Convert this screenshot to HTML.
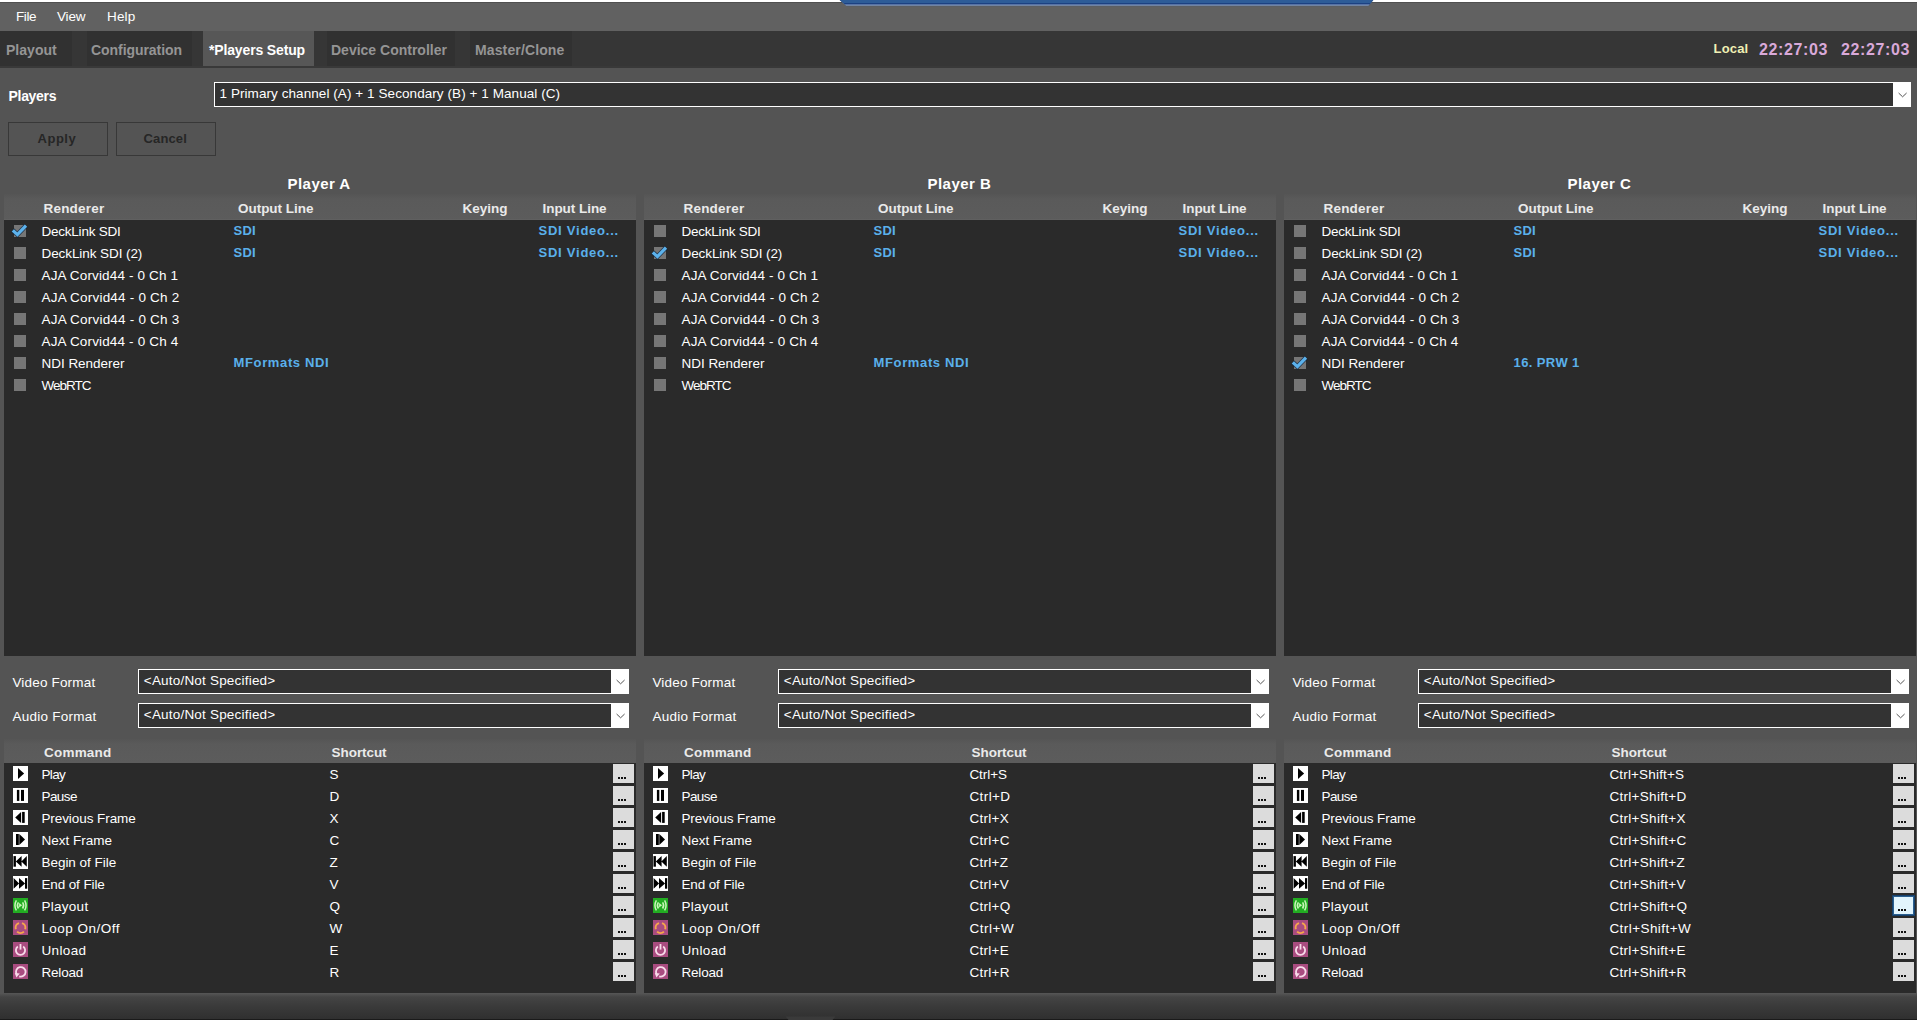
<!DOCTYPE html>
<html><head><meta charset="utf-8"><title>Players Setup</title>
<style>
*{margin:0;padding:0;box-sizing:border-box}
html,body{width:1917px;height:1020px;overflow:hidden;background:#545454;font-family:"Liberation Sans", sans-serif;color:#fff}
.a{position:absolute}
.t{position:absolute;white-space:nowrap;line-height:20px;height:20px}
.ic{position:absolute;width:15px;height:15px}
.ic.wh{background:#fff}
.ic svg{position:absolute;left:0;top:0}
.hdr{background:linear-gradient(#555 0px,#5a5a5a 5px,#5c5c5c 100%)}
.body{background:#2a2a2a}
.cb{position:absolute;width:12px;height:12px;background:#767676}
.combo{position:absolute;border:1px solid #fff;background:#333}
.combo .arr{position:absolute;right:0;top:0;width:17px;bottom:0;background:#fff}
.dots{position:absolute;width:21px;height:19px;background:#dcdcdc}
.dots i{position:absolute;top:13px;width:2px;height:2px;background:#111}
.dots.focus{background:#e2f5fd;box-shadow:0 0 0 1px #17406a;border:1px solid #2a5f90}
.dots.focus i{top:12px;margin-left:-1px}
</style></head><body>
<div class="a" style="left:0;top:0;width:1917px;height:2px;background:#fff"></div>
<div class="a" style="left:0;top:2px;width:1917px;height:29px;background:#616161"></div>
<div class="a" style="left:0;top:2px;width:1917px;height:1px;background:#505050"></div>
<svg class="a" style="left:838px;top:0" width="540" height="8"><path d="M1.5 0 L535.5 0 L530.5 6.2 L8.5 6.2 Z" fill="#4a5a70"/><path d="M2 0 L535 0 L530.5 5.5 L8 5.5 Z" fill="#98aed4"/><path d="M2 0 L535 0 L531.5 4.5 L7 4.5 Z" fill="#17397a"/><path d="M2 0 L535 0 L532.5 3.3 L5.5 3.3 Z" fill="#2d5c98"/></svg>

<div class="t" style="left:16px;top:7.32px;font-size:13.5px;color:#fff;letter-spacing:-0.41px;">File</div>
<div class="t" style="left:57px;top:7.32px;font-size:13.5px;color:#fff;letter-spacing:-0.16px;">View</div>
<div class="t" style="left:107px;top:7.32px;font-size:13.5px;color:#fff;letter-spacing:0.18px;">Help</div>
<div class="a" style="left:0;top:31px;width:1917px;height:37px;background:#363636"></div>
<div class="a" style="left:0;top:66px;width:1917px;height:2px;background:#393939"></div>
<div class="a" style="left:0px;top:31px;width:72px;height:35px;background:#313131"></div>
<div class="t" style="left:6px;top:40.15px;font-size:14px;font-weight:bold;color:#959595;letter-spacing:0.02px;">Playout</div>
<div class="a" style="left:87px;top:31px;width:105px;height:35px;background:#313131"></div>
<div class="t" style="left:91px;top:40.15px;font-size:14px;font-weight:bold;color:#959595;letter-spacing:-0.06px;">Configuration</div>
<div class="a" style="left:203px;top:31px;width:111px;height:35px;background:#575757"></div>
<div class="t" style="left:209px;top:40.15px;font-size:14px;font-weight:bold;color:#fff;letter-spacing:-0.15px;">*Players Setup</div>
<div class="a" style="left:327px;top:31px;width:128px;height:35px;background:#313131"></div>
<div class="t" style="left:331px;top:40.15px;font-size:14px;font-weight:bold;color:#959595;letter-spacing:-0.0px;">Device Controller</div>
<div class="a" style="left:470px;top:31px;width:102px;height:35px;background:#313131"></div>
<div class="t" style="left:475px;top:40.15px;font-size:14px;font-weight:bold;color:#959595;letter-spacing:0.13px;">Master/Clone</div>
<div class="t" style="left:1713.6px;top:39.00px;font-size:13px;font-weight:bold;color:#f0f0b4;letter-spacing:0.16px;">Local</div>
<div class="t" style="left:1759px;top:40.16px;font-size:16px;font-weight:bold;color:#d9a9d9;letter-spacing:0.61px;">22:27:03</div>
<div class="t" style="left:1841px;top:40.16px;font-size:16px;font-weight:bold;color:#d9a9d9;letter-spacing:0.61px;">22:27:03</div>
<div class="t" style="left:8.5px;top:86.05px;font-size:14px;font-weight:bold;color:#fff;letter-spacing:-0.3px;">Players</div>
<div class="combo" style="left:214px;top:82px;width:1697px;height:25px"><div class="arr"><svg width="18" height="23" style="position:absolute;left:0;top:0"><path d="M5.6 10 L9.6 13.8 L13.6 10" fill="none" stroke="#555" stroke-width="1"/></svg></div></div>
<div class="t" style="left:219.5px;top:84.32px;font-size:13.5px;color:#fff;letter-spacing:0.07px;">1 Primary channel (A) + 1 Secondary (B) + 1 Manual (C)</div>
<div class="a" style="left:8px;top:122px;width:100px;height:34px;border:1px solid #383838"></div>
<div class="a" style="left:116px;top:122px;width:100px;height:34px;border:1px solid #383838"></div>
<div class="t" style="left:37.5px;top:129.10px;font-size:13px;font-weight:bold;color:#262626;letter-spacing:0.53px;">Apply</div>
<div class="t" style="left:143.5px;top:129.10px;font-size:13px;font-weight:bold;color:#262626;letter-spacing:0.14px;">Cancel</div>
<div class="t" style="left:287.5px;top:173.80px;font-size:15px;font-weight:bold;color:#fff;letter-spacing:0.46px;">Player A</div>
<div class="a hdr" style="left:4px;top:194px;width:632px;height:26px"></div>
<div class="a" style="left:4px;top:219px;width:632px;height:1px;background:#606060"></div>
<div class="t" style="left:43.5px;top:199.32px;font-size:13.5px;font-weight:bold;color:#eaeaea;letter-spacing:0.2px;">Renderer</div>
<div class="t" style="left:238px;top:199.32px;font-size:13.5px;font-weight:bold;color:#eaeaea;letter-spacing:-0.03px;">Output Line</div>
<div class="t" style="left:462.5px;top:199.32px;font-size:13.5px;font-weight:bold;color:#eaeaea;letter-spacing:-0.01px;">Keying</div>
<div class="t" style="left:542.5px;top:199.32px;font-size:13.5px;font-weight:bold;color:#eaeaea;letter-spacing:-0.04px;">Input Line</div>
<div class="a body" style="left:4px;top:220px;width:632px;height:436px"></div>
<div class="cb" style="left:14px;top:225px"><svg width="22" height="18" style="position:absolute;left:-4px;top:-3px"><path d="M2.8 8.3 L7.4 12.6 L16 3.6" fill="none" stroke="#0c2440" stroke-width="4.6" stroke-opacity="0.8"/><path d="M2.8 8.3 L7.4 12.6 L16 3.6" fill="none" stroke="#5cb2ec" stroke-width="3.2"/></svg></div>
<div class="t" style="left:41.5px;top:222.32px;font-size:13.5px;color:#fff;letter-spacing:-0.23px;">DeckLink SDI</div>
<div class="t" style="left:233.5px;top:220.90px;font-size:13px;font-weight:bold;color:#5ab0ea;letter-spacing:0.27px;">SDI</div>
<div class="t" style="left:538.5px;top:220.90px;font-size:13px;font-weight:bold;color:#5ab0ea;letter-spacing:0.76px;">SDI Video...</div>
<div class="cb" style="left:14px;top:247px"></div>
<div class="t" style="left:41.5px;top:244.32px;font-size:13.5px;color:#fff;letter-spacing:-0.08px;">DeckLink SDI (2)</div>
<div class="t" style="left:233.5px;top:242.90px;font-size:13px;font-weight:bold;color:#5ab0ea;letter-spacing:0.27px;">SDI</div>
<div class="t" style="left:538.5px;top:242.90px;font-size:13px;font-weight:bold;color:#5ab0ea;letter-spacing:0.76px;">SDI Video...</div>
<div class="cb" style="left:14px;top:269px"></div>
<div class="t" style="left:41.5px;top:266.32px;font-size:13.5px;color:#fff;letter-spacing:0.15px;">AJA Corvid44 - 0 Ch 1</div>
<div class="cb" style="left:14px;top:291px"></div>
<div class="t" style="left:41.5px;top:288.32px;font-size:13.5px;color:#fff;letter-spacing:0.21px;">AJA Corvid44 - 0 Ch 2</div>
<div class="cb" style="left:14px;top:313px"></div>
<div class="t" style="left:41.5px;top:310.32px;font-size:13.5px;color:#fff;letter-spacing:0.21px;">AJA Corvid44 - 0 Ch 3</div>
<div class="cb" style="left:14px;top:335px"></div>
<div class="t" style="left:41.5px;top:332.32px;font-size:13.5px;color:#fff;letter-spacing:0.16px;">AJA Corvid44 - 0 Ch 4</div>
<div class="cb" style="left:14px;top:357px"></div>
<div class="t" style="left:41.5px;top:354.32px;font-size:13.5px;color:#fff;letter-spacing:-0.03px;">NDI Renderer</div>
<div class="t" style="left:233.5px;top:352.90px;font-size:13px;font-weight:bold;color:#5ab0ea;letter-spacing:0.64px;">MFormats NDI</div>
<div class="cb" style="left:14px;top:379px"></div>
<div class="t" style="left:41.5px;top:376.32px;font-size:13.5px;color:#fff;letter-spacing:-1.0px;">WebRTC</div>
<div class="t" style="left:12.4px;top:673.32px;font-size:13.5px;color:#fff;letter-spacing:0.18px;">Video Format</div>
<div class="combo" style="left:138px;top:669px;width:491px;height:25px"><div class="arr"><svg width="18" height="23" style="position:absolute;left:0;top:0"><path d="M5.6 10 L9.6 13.8 L13.6 10" fill="none" stroke="#555" stroke-width="1"/></svg></div></div>
<div class="t" style="left:143.8px;top:670.92px;font-size:13.5px;color:#fff;letter-spacing:0.2px;">&lt;Auto/Not Specified&gt;</div>
<div class="t" style="left:12.4px;top:707.32px;font-size:13.5px;color:#fff;letter-spacing:0.25px;">Audio Format</div>
<div class="combo" style="left:138px;top:703px;width:491px;height:25px"><div class="arr"><svg width="18" height="23" style="position:absolute;left:0;top:0"><path d="M5.6 10 L9.6 13.8 L13.6 10" fill="none" stroke="#555" stroke-width="1"/></svg></div></div>
<div class="t" style="left:143.8px;top:704.92px;font-size:13.5px;color:#fff;letter-spacing:0.2px;">&lt;Auto/Not Specified&gt;</div>
<div class="a hdr" style="left:4px;top:739px;width:632px;height:24px"></div>
<div class="t" style="left:44px;top:743.32px;font-size:13.5px;font-weight:bold;color:#eaeaea;letter-spacing:0.21px;">Command</div>
<div class="t" style="left:331.6px;top:743.32px;font-size:13.5px;font-weight:bold;color:#eaeaea;letter-spacing:-0.07px;">Shortcut</div>
<div class="a body" style="left:4px;top:763px;width:632px;height:230px"></div>
<div class="a" style="left:13px;top:766px;width:15px;height:15px"><div class="ic wh"><svg width="15" height="15"><path d="M5 1.9 L11.1 7.4 L5 12.9 Z" fill="#000"/></svg></div></div>
<div class="t" style="left:41.4px;top:765.32px;font-size:13.5px;color:#fff;letter-spacing:-0.6px;">Play</div>
<div class="t" style="left:329.4px;top:765.32px;font-size:13.5px;color:#fff;letter-spacing:0.0px;">S</div>
<div class="dots" style="left:613px;top:764px"><i style="left:5px"></i><i style="left:8px"></i><i style="left:11px"></i></div>
<div class="a" style="left:13px;top:788px;width:15px;height:15px"><div class="ic wh"><svg width="15" height="15"><rect x="3.9" y="1.9" width="2.4" height="11" fill="#000"/><rect x="8" y="1.9" width="3" height="11" fill="#000"/></svg></div></div>
<div class="t" style="left:41.4px;top:787.32px;font-size:13.5px;color:#fff;letter-spacing:-0.52px;">Pause</div>
<div class="t" style="left:329.4px;top:787.32px;font-size:13.5px;color:#fff;letter-spacing:0.0px;">D</div>
<div class="dots" style="left:613px;top:786px"><i style="left:5px"></i><i style="left:8px"></i><i style="left:11px"></i></div>
<div class="a" style="left:13px;top:810px;width:15px;height:15px"><div class="ic wh"><svg width="15" height="15"><path d="M2.2 7.4 L8.1 1.9 L8.1 12.9 Z" fill="#000"/><rect x="9.1" y="1.9" width="2.6" height="11" fill="#000"/></svg></div></div>
<div class="t" style="left:41.4px;top:809.32px;font-size:13.5px;color:#fff;letter-spacing:-0.07px;">Previous Frame</div>
<div class="t" style="left:329.4px;top:809.32px;font-size:13.5px;color:#fff;letter-spacing:0.0px;">X</div>
<div class="dots" style="left:613px;top:808px"><i style="left:5px"></i><i style="left:8px"></i><i style="left:11px"></i></div>
<div class="a" style="left:13px;top:832px;width:15px;height:15px"><div class="ic wh"><svg width="15" height="15"><rect x="3" y="2" width="2.8" height="11" fill="#000"/><path d="M6.3 2 L12 7.5 L6.3 13 Z" fill="#000"/></svg></div></div>
<div class="t" style="left:41.4px;top:831.32px;font-size:13.5px;color:#fff;letter-spacing:0.01px;">Next Frame</div>
<div class="t" style="left:329.4px;top:831.32px;font-size:13.5px;color:#fff;letter-spacing:0.0px;">C</div>
<div class="dots" style="left:613px;top:830px"><i style="left:5px"></i><i style="left:8px"></i><i style="left:11px"></i></div>
<div class="a" style="left:13px;top:854px;width:15px;height:15px"><div class="ic wh"><svg width="15" height="15"><rect x="0.5" y="2.1" width="2.4" height="10.6" fill="#000"/><path d="M2.8 7.4 L8.6 2.1 L8.6 12.7 Z M8.4 7.4 L13.8 2.1 L13.8 12.7 Z" fill="#000"/></svg></div></div>
<div class="t" style="left:41.4px;top:853.32px;font-size:13.5px;color:#fff;letter-spacing:-0.01px;">Begin of File</div>
<div class="t" style="left:329.4px;top:853.32px;font-size:13.5px;color:#fff;letter-spacing:0.0px;">Z</div>
<div class="dots" style="left:613px;top:852px"><i style="left:5px"></i><i style="left:8px"></i><i style="left:11px"></i></div>
<div class="a" style="left:13px;top:876px;width:15px;height:15px"><div class="ic wh"><svg width="15" height="15"><rect x="12" y="2.1" width="2.2" height="10.6" fill="#000"/><path d="M0.6 2.1 L6.1 7.4 L0.6 12.7 Z M6 2.1 L12.1 7.4 L6 12.7 Z" fill="#000"/></svg></div></div>
<div class="t" style="left:41.4px;top:875.32px;font-size:13.5px;color:#fff;letter-spacing:-0.11px;">End of File</div>
<div class="t" style="left:329.4px;top:875.32px;font-size:13.5px;color:#fff;letter-spacing:0.0px;">V</div>
<div class="dots" style="left:613px;top:874px"><i style="left:5px"></i><i style="left:8px"></i><i style="left:11px"></i></div>
<div class="a" style="left:13px;top:898px;width:15px;height:15px"><div class="ic" style="background:#22ad22"><svg width="15" height="15" fill="none" stroke="#c8f6b8" stroke-width="1.5"><path d="M3.4 2.4 Q0.5 7.4 3.4 12.4"/><path d="M11.6 2.4 Q14.5 7.4 11.6 12.4"/><path d="M5.4 4.3 Q3.3 7.4 5.4 10.5"/><path d="M9.6 4.3 Q11.7 7.4 9.6 10.5"/><path d="M6.1 5.1 L9.1 7.3 L6.1 9.5 Z" fill="#c8f6b8" stroke="none"/></svg></div></div>
<div class="t" style="left:41.4px;top:897.32px;font-size:13.5px;color:#fff;letter-spacing:0.29px;">Playout</div>
<div class="t" style="left:329.4px;top:897.32px;font-size:13.5px;color:#fff;letter-spacing:0.0px;">Q</div>
<div class="dots" style="left:613px;top:896px"><i style="left:5px"></i><i style="left:8px"></i><i style="left:11px"></i></div>
<div class="a" style="left:13px;top:920px;width:15px;height:15px"><div class="ic" style="background:#a94c80"><svg width="15" height="15" fill="none" stroke="#f6a84a" stroke-width="2"><path d="M2.8 9.2 A4.9 4.9 0 0 1 6 3.1"/><path d="M9 3.1 A4.9 4.9 0 0 1 12.2 9.2"/><path d="M10.9 11.6 A4.9 4.9 0 0 1 4.1 11.6"/></svg></div></div>
<div class="t" style="left:41.4px;top:919.32px;font-size:13.5px;color:#fff;letter-spacing:0.47px;">Loop On/Off</div>
<div class="t" style="left:329.4px;top:919.32px;font-size:13.5px;color:#fff;letter-spacing:0.0px;">W</div>
<div class="dots" style="left:613px;top:918px"><i style="left:5px"></i><i style="left:8px"></i><i style="left:11px"></i></div>
<div class="a" style="left:13px;top:942px;width:15px;height:15px"><div class="ic" style="background:#a94c80"><svg width="15" height="15" fill="none" stroke="#f8dcea" stroke-width="1.8"><path d="M4.8 4.5 A4.6 4.6 0 1 0 10.2 4.5"/><path d="M7.5 2 V7.6"/></svg></div></div>
<div class="t" style="left:41.4px;top:941.32px;font-size:13.5px;color:#fff;letter-spacing:0.39px;">Unload</div>
<div class="t" style="left:329.4px;top:941.32px;font-size:13.5px;color:#fff;letter-spacing:0.0px;">E</div>
<div class="dots" style="left:613px;top:940px"><i style="left:5px"></i><i style="left:8px"></i><i style="left:11px"></i></div>
<div class="a" style="left:13px;top:964px;width:15px;height:15px"><div class="ic" style="background:#a94c80"><svg width="15" height="15" fill="none" stroke="#f8dcea" stroke-width="1.8"><path d="M3.6 10.2 A4.8 4.8 0 1 1 6.2 12.4"/><path d="M1.8 9 L6.8 9.4 L3.4 13.6 Z" fill="#f8dcea" stroke="none"/></svg></div></div>
<div class="t" style="left:41.4px;top:963.32px;font-size:13.5px;color:#fff;letter-spacing:-0.17px;">Reload</div>
<div class="t" style="left:329.4px;top:963.32px;font-size:13.5px;color:#fff;letter-spacing:0.0px;">R</div>
<div class="dots" style="left:613px;top:962px"><i style="left:5px"></i><i style="left:8px"></i><i style="left:11px"></i></div>
<div class="t" style="left:927.5px;top:173.80px;font-size:15px;font-weight:bold;color:#fff;letter-spacing:0.46px;">Player B</div>
<div class="a hdr" style="left:644px;top:194px;width:632px;height:26px"></div>
<div class="a" style="left:644px;top:219px;width:632px;height:1px;background:#606060"></div>
<div class="t" style="left:683.5px;top:199.32px;font-size:13.5px;font-weight:bold;color:#eaeaea;letter-spacing:0.2px;">Renderer</div>
<div class="t" style="left:878px;top:199.32px;font-size:13.5px;font-weight:bold;color:#eaeaea;letter-spacing:-0.03px;">Output Line</div>
<div class="t" style="left:1102.5px;top:199.32px;font-size:13.5px;font-weight:bold;color:#eaeaea;letter-spacing:-0.01px;">Keying</div>
<div class="t" style="left:1182.5px;top:199.32px;font-size:13.5px;font-weight:bold;color:#eaeaea;letter-spacing:-0.04px;">Input Line</div>
<div class="a body" style="left:644px;top:220px;width:632px;height:436px"></div>
<div class="cb" style="left:654px;top:225px"></div>
<div class="t" style="left:681.5px;top:222.32px;font-size:13.5px;color:#fff;letter-spacing:-0.23px;">DeckLink SDI</div>
<div class="t" style="left:873.5px;top:220.90px;font-size:13px;font-weight:bold;color:#5ab0ea;letter-spacing:0.27px;">SDI</div>
<div class="t" style="left:1178.5px;top:220.90px;font-size:13px;font-weight:bold;color:#5ab0ea;letter-spacing:0.76px;">SDI Video...</div>
<div class="cb" style="left:654px;top:247px"><svg width="22" height="18" style="position:absolute;left:-4px;top:-3px"><path d="M2.8 8.3 L7.4 12.6 L16 3.6" fill="none" stroke="#0c2440" stroke-width="4.6" stroke-opacity="0.8"/><path d="M2.8 8.3 L7.4 12.6 L16 3.6" fill="none" stroke="#5cb2ec" stroke-width="3.2"/></svg></div>
<div class="t" style="left:681.5px;top:244.32px;font-size:13.5px;color:#fff;letter-spacing:-0.08px;">DeckLink SDI (2)</div>
<div class="t" style="left:873.5px;top:242.90px;font-size:13px;font-weight:bold;color:#5ab0ea;letter-spacing:0.27px;">SDI</div>
<div class="t" style="left:1178.5px;top:242.90px;font-size:13px;font-weight:bold;color:#5ab0ea;letter-spacing:0.76px;">SDI Video...</div>
<div class="cb" style="left:654px;top:269px"></div>
<div class="t" style="left:681.5px;top:266.32px;font-size:13.5px;color:#fff;letter-spacing:0.15px;">AJA Corvid44 - 0 Ch 1</div>
<div class="cb" style="left:654px;top:291px"></div>
<div class="t" style="left:681.5px;top:288.32px;font-size:13.5px;color:#fff;letter-spacing:0.21px;">AJA Corvid44 - 0 Ch 2</div>
<div class="cb" style="left:654px;top:313px"></div>
<div class="t" style="left:681.5px;top:310.32px;font-size:13.5px;color:#fff;letter-spacing:0.21px;">AJA Corvid44 - 0 Ch 3</div>
<div class="cb" style="left:654px;top:335px"></div>
<div class="t" style="left:681.5px;top:332.32px;font-size:13.5px;color:#fff;letter-spacing:0.16px;">AJA Corvid44 - 0 Ch 4</div>
<div class="cb" style="left:654px;top:357px"></div>
<div class="t" style="left:681.5px;top:354.32px;font-size:13.5px;color:#fff;letter-spacing:-0.03px;">NDI Renderer</div>
<div class="t" style="left:873.5px;top:352.90px;font-size:13px;font-weight:bold;color:#5ab0ea;letter-spacing:0.64px;">MFormats NDI</div>
<div class="cb" style="left:654px;top:379px"></div>
<div class="t" style="left:681.5px;top:376.32px;font-size:13.5px;color:#fff;letter-spacing:-1.0px;">WebRTC</div>
<div class="t" style="left:652.4px;top:673.32px;font-size:13.5px;color:#fff;letter-spacing:0.18px;">Video Format</div>
<div class="combo" style="left:778px;top:669px;width:491px;height:25px"><div class="arr"><svg width="18" height="23" style="position:absolute;left:0;top:0"><path d="M5.6 10 L9.6 13.8 L13.6 10" fill="none" stroke="#555" stroke-width="1"/></svg></div></div>
<div class="t" style="left:783.8px;top:670.92px;font-size:13.5px;color:#fff;letter-spacing:0.2px;">&lt;Auto/Not Specified&gt;</div>
<div class="t" style="left:652.4px;top:707.32px;font-size:13.5px;color:#fff;letter-spacing:0.25px;">Audio Format</div>
<div class="combo" style="left:778px;top:703px;width:491px;height:25px"><div class="arr"><svg width="18" height="23" style="position:absolute;left:0;top:0"><path d="M5.6 10 L9.6 13.8 L13.6 10" fill="none" stroke="#555" stroke-width="1"/></svg></div></div>
<div class="t" style="left:783.8px;top:704.92px;font-size:13.5px;color:#fff;letter-spacing:0.2px;">&lt;Auto/Not Specified&gt;</div>
<div class="a hdr" style="left:644px;top:739px;width:632px;height:24px"></div>
<div class="t" style="left:684px;top:743.32px;font-size:13.5px;font-weight:bold;color:#eaeaea;letter-spacing:0.21px;">Command</div>
<div class="t" style="left:971.6px;top:743.32px;font-size:13.5px;font-weight:bold;color:#eaeaea;letter-spacing:-0.07px;">Shortcut</div>
<div class="a body" style="left:644px;top:763px;width:632px;height:230px"></div>
<div class="a" style="left:653px;top:766px;width:15px;height:15px"><div class="ic wh"><svg width="15" height="15"><path d="M5 1.9 L11.1 7.4 L5 12.9 Z" fill="#000"/></svg></div></div>
<div class="t" style="left:681.4px;top:765.32px;font-size:13.5px;color:#fff;letter-spacing:-0.6px;">Play</div>
<div class="t" style="left:969.4px;top:765.32px;font-size:13.5px;color:#fff;letter-spacing:-0.04px;">Ctrl+S</div>
<div class="dots" style="left:1253px;top:764px"><i style="left:5px"></i><i style="left:8px"></i><i style="left:11px"></i></div>
<div class="a" style="left:653px;top:788px;width:15px;height:15px"><div class="ic wh"><svg width="15" height="15"><rect x="3.9" y="1.9" width="2.4" height="11" fill="#000"/><rect x="8" y="1.9" width="3" height="11" fill="#000"/></svg></div></div>
<div class="t" style="left:681.4px;top:787.32px;font-size:13.5px;color:#fff;letter-spacing:-0.52px;">Pause</div>
<div class="t" style="left:969.4px;top:787.32px;font-size:13.5px;color:#fff;letter-spacing:0.42px;">Ctrl+D</div>
<div class="dots" style="left:1253px;top:786px"><i style="left:5px"></i><i style="left:8px"></i><i style="left:11px"></i></div>
<div class="a" style="left:653px;top:810px;width:15px;height:15px"><div class="ic wh"><svg width="15" height="15"><path d="M2.2 7.4 L8.1 1.9 L8.1 12.9 Z" fill="#000"/><rect x="9.1" y="1.9" width="2.6" height="11" fill="#000"/></svg></div></div>
<div class="t" style="left:681.4px;top:809.32px;font-size:13.5px;color:#fff;letter-spacing:-0.07px;">Previous Frame</div>
<div class="t" style="left:969.4px;top:809.32px;font-size:13.5px;color:#fff;letter-spacing:0.3px;">Ctrl+X</div>
<div class="dots" style="left:1253px;top:808px"><i style="left:5px"></i><i style="left:8px"></i><i style="left:11px"></i></div>
<div class="a" style="left:653px;top:832px;width:15px;height:15px"><div class="ic wh"><svg width="15" height="15"><rect x="3" y="2" width="2.8" height="11" fill="#000"/><path d="M6.3 2 L12 7.5 L6.3 13 Z" fill="#000"/></svg></div></div>
<div class="t" style="left:681.4px;top:831.32px;font-size:13.5px;color:#fff;letter-spacing:0.01px;">Next Frame</div>
<div class="t" style="left:969.4px;top:831.32px;font-size:13.5px;color:#fff;letter-spacing:0.3px;">Ctrl+C</div>
<div class="dots" style="left:1253px;top:830px"><i style="left:5px"></i><i style="left:8px"></i><i style="left:11px"></i></div>
<div class="a" style="left:653px;top:854px;width:15px;height:15px"><div class="ic wh"><svg width="15" height="15"><rect x="0.5" y="2.1" width="2.4" height="10.6" fill="#000"/><path d="M2.8 7.4 L8.6 2.1 L8.6 12.7 Z M8.4 7.4 L13.8 2.1 L13.8 12.7 Z" fill="#000"/></svg></div></div>
<div class="t" style="left:681.4px;top:853.32px;font-size:13.5px;color:#fff;letter-spacing:-0.01px;">Begin of File</div>
<div class="t" style="left:969.4px;top:853.32px;font-size:13.5px;color:#fff;letter-spacing:0.3px;">Ctrl+Z</div>
<div class="dots" style="left:1253px;top:852px"><i style="left:5px"></i><i style="left:8px"></i><i style="left:11px"></i></div>
<div class="a" style="left:653px;top:876px;width:15px;height:15px"><div class="ic wh"><svg width="15" height="15"><rect x="12" y="2.1" width="2.2" height="10.6" fill="#000"/><path d="M0.6 2.1 L6.1 7.4 L0.6 12.7 Z M6 2.1 L12.1 7.4 L6 12.7 Z" fill="#000"/></svg></div></div>
<div class="t" style="left:681.4px;top:875.32px;font-size:13.5px;color:#fff;letter-spacing:-0.11px;">End of File</div>
<div class="t" style="left:969.4px;top:875.32px;font-size:13.5px;color:#fff;letter-spacing:0.3px;">Ctrl+V</div>
<div class="dots" style="left:1253px;top:874px"><i style="left:5px"></i><i style="left:8px"></i><i style="left:11px"></i></div>
<div class="a" style="left:653px;top:898px;width:15px;height:15px"><div class="ic" style="background:#22ad22"><svg width="15" height="15" fill="none" stroke="#c8f6b8" stroke-width="1.5"><path d="M3.4 2.4 Q0.5 7.4 3.4 12.4"/><path d="M11.6 2.4 Q14.5 7.4 11.6 12.4"/><path d="M5.4 4.3 Q3.3 7.4 5.4 10.5"/><path d="M9.6 4.3 Q11.7 7.4 9.6 10.5"/><path d="M6.1 5.1 L9.1 7.3 L6.1 9.5 Z" fill="#c8f6b8" stroke="none"/></svg></div></div>
<div class="t" style="left:681.4px;top:897.32px;font-size:13.5px;color:#fff;letter-spacing:0.29px;">Playout</div>
<div class="t" style="left:969.4px;top:897.32px;font-size:13.5px;color:#fff;letter-spacing:0.3px;">Ctrl+Q</div>
<div class="dots" style="left:1253px;top:896px"><i style="left:5px"></i><i style="left:8px"></i><i style="left:11px"></i></div>
<div class="a" style="left:653px;top:920px;width:15px;height:15px"><div class="ic" style="background:#a94c80"><svg width="15" height="15" fill="none" stroke="#f6a84a" stroke-width="2"><path d="M2.8 9.2 A4.9 4.9 0 0 1 6 3.1"/><path d="M9 3.1 A4.9 4.9 0 0 1 12.2 9.2"/><path d="M10.9 11.6 A4.9 4.9 0 0 1 4.1 11.6"/></svg></div></div>
<div class="t" style="left:681.4px;top:919.32px;font-size:13.5px;color:#fff;letter-spacing:0.47px;">Loop On/Off</div>
<div class="t" style="left:969.4px;top:919.32px;font-size:13.5px;color:#fff;letter-spacing:0.54px;">Ctrl+W</div>
<div class="dots" style="left:1253px;top:918px"><i style="left:5px"></i><i style="left:8px"></i><i style="left:11px"></i></div>
<div class="a" style="left:653px;top:942px;width:15px;height:15px"><div class="ic" style="background:#a94c80"><svg width="15" height="15" fill="none" stroke="#f8dcea" stroke-width="1.8"><path d="M4.8 4.5 A4.6 4.6 0 1 0 10.2 4.5"/><path d="M7.5 2 V7.6"/></svg></div></div>
<div class="t" style="left:681.4px;top:941.32px;font-size:13.5px;color:#fff;letter-spacing:0.39px;">Unload</div>
<div class="t" style="left:969.4px;top:941.32px;font-size:13.5px;color:#fff;letter-spacing:0.3px;">Ctrl+E</div>
<div class="dots" style="left:1253px;top:940px"><i style="left:5px"></i><i style="left:8px"></i><i style="left:11px"></i></div>
<div class="a" style="left:653px;top:964px;width:15px;height:15px"><div class="ic" style="background:#a94c80"><svg width="15" height="15" fill="none" stroke="#f8dcea" stroke-width="1.8"><path d="M3.6 10.2 A4.8 4.8 0 1 1 6.2 12.4"/><path d="M1.8 9 L6.8 9.4 L3.4 13.6 Z" fill="#f8dcea" stroke="none"/></svg></div></div>
<div class="t" style="left:681.4px;top:963.32px;font-size:13.5px;color:#fff;letter-spacing:-0.17px;">Reload</div>
<div class="t" style="left:969.4px;top:963.32px;font-size:13.5px;color:#fff;letter-spacing:0.3px;">Ctrl+R</div>
<div class="dots" style="left:1253px;top:962px"><i style="left:5px"></i><i style="left:8px"></i><i style="left:11px"></i></div>
<div class="t" style="left:1567.5px;top:173.80px;font-size:15px;font-weight:bold;color:#fff;letter-spacing:0.46px;">Player C</div>
<div class="a hdr" style="left:1284px;top:194px;width:632px;height:26px"></div>
<div class="a" style="left:1284px;top:219px;width:632px;height:1px;background:#606060"></div>
<div class="t" style="left:1323.5px;top:199.32px;font-size:13.5px;font-weight:bold;color:#eaeaea;letter-spacing:0.2px;">Renderer</div>
<div class="t" style="left:1518px;top:199.32px;font-size:13.5px;font-weight:bold;color:#eaeaea;letter-spacing:-0.03px;">Output Line</div>
<div class="t" style="left:1742.5px;top:199.32px;font-size:13.5px;font-weight:bold;color:#eaeaea;letter-spacing:-0.01px;">Keying</div>
<div class="t" style="left:1822.5px;top:199.32px;font-size:13.5px;font-weight:bold;color:#eaeaea;letter-spacing:-0.04px;">Input Line</div>
<div class="a body" style="left:1284px;top:220px;width:632px;height:436px"></div>
<div class="cb" style="left:1294px;top:225px"></div>
<div class="t" style="left:1321.5px;top:222.32px;font-size:13.5px;color:#fff;letter-spacing:-0.23px;">DeckLink SDI</div>
<div class="t" style="left:1513.5px;top:220.90px;font-size:13px;font-weight:bold;color:#5ab0ea;letter-spacing:0.27px;">SDI</div>
<div class="t" style="left:1818.5px;top:220.90px;font-size:13px;font-weight:bold;color:#5ab0ea;letter-spacing:0.76px;">SDI Video...</div>
<div class="cb" style="left:1294px;top:247px"></div>
<div class="t" style="left:1321.5px;top:244.32px;font-size:13.5px;color:#fff;letter-spacing:-0.08px;">DeckLink SDI (2)</div>
<div class="t" style="left:1513.5px;top:242.90px;font-size:13px;font-weight:bold;color:#5ab0ea;letter-spacing:0.27px;">SDI</div>
<div class="t" style="left:1818.5px;top:242.90px;font-size:13px;font-weight:bold;color:#5ab0ea;letter-spacing:0.76px;">SDI Video...</div>
<div class="cb" style="left:1294px;top:269px"></div>
<div class="t" style="left:1321.5px;top:266.32px;font-size:13.5px;color:#fff;letter-spacing:0.15px;">AJA Corvid44 - 0 Ch 1</div>
<div class="cb" style="left:1294px;top:291px"></div>
<div class="t" style="left:1321.5px;top:288.32px;font-size:13.5px;color:#fff;letter-spacing:0.21px;">AJA Corvid44 - 0 Ch 2</div>
<div class="cb" style="left:1294px;top:313px"></div>
<div class="t" style="left:1321.5px;top:310.32px;font-size:13.5px;color:#fff;letter-spacing:0.21px;">AJA Corvid44 - 0 Ch 3</div>
<div class="cb" style="left:1294px;top:335px"></div>
<div class="t" style="left:1321.5px;top:332.32px;font-size:13.5px;color:#fff;letter-spacing:0.16px;">AJA Corvid44 - 0 Ch 4</div>
<div class="cb" style="left:1294px;top:357px"><svg width="22" height="18" style="position:absolute;left:-4px;top:-3px"><path d="M2.8 8.3 L7.4 12.6 L16 3.6" fill="none" stroke="#0c2440" stroke-width="4.6" stroke-opacity="0.8"/><path d="M2.8 8.3 L7.4 12.6 L16 3.6" fill="none" stroke="#5cb2ec" stroke-width="3.2"/></svg></div>
<div class="t" style="left:1321.5px;top:354.32px;font-size:13.5px;color:#fff;letter-spacing:-0.03px;">NDI Renderer</div>
<div class="t" style="left:1513.5px;top:352.90px;font-size:13px;font-weight:bold;color:#5ab0ea;letter-spacing:0.4px;">16. PRW 1</div>
<div class="cb" style="left:1294px;top:379px"></div>
<div class="t" style="left:1321.5px;top:376.32px;font-size:13.5px;color:#fff;letter-spacing:-1.0px;">WebRTC</div>
<div class="t" style="left:1292.4px;top:673.32px;font-size:13.5px;color:#fff;letter-spacing:0.18px;">Video Format</div>
<div class="combo" style="left:1418px;top:669px;width:491px;height:25px"><div class="arr"><svg width="18" height="23" style="position:absolute;left:0;top:0"><path d="M5.6 10 L9.6 13.8 L13.6 10" fill="none" stroke="#555" stroke-width="1"/></svg></div></div>
<div class="t" style="left:1423.8px;top:670.92px;font-size:13.5px;color:#fff;letter-spacing:0.2px;">&lt;Auto/Not Specified&gt;</div>
<div class="t" style="left:1292.4px;top:707.32px;font-size:13.5px;color:#fff;letter-spacing:0.25px;">Audio Format</div>
<div class="combo" style="left:1418px;top:703px;width:491px;height:25px"><div class="arr"><svg width="18" height="23" style="position:absolute;left:0;top:0"><path d="M5.6 10 L9.6 13.8 L13.6 10" fill="none" stroke="#555" stroke-width="1"/></svg></div></div>
<div class="t" style="left:1423.8px;top:704.92px;font-size:13.5px;color:#fff;letter-spacing:0.2px;">&lt;Auto/Not Specified&gt;</div>
<div class="a hdr" style="left:1284px;top:739px;width:632px;height:24px"></div>
<div class="t" style="left:1324px;top:743.32px;font-size:13.5px;font-weight:bold;color:#eaeaea;letter-spacing:0.21px;">Command</div>
<div class="t" style="left:1611.6px;top:743.32px;font-size:13.5px;font-weight:bold;color:#eaeaea;letter-spacing:-0.07px;">Shortcut</div>
<div class="a body" style="left:1284px;top:763px;width:632px;height:230px"></div>
<div class="a" style="left:1293px;top:766px;width:15px;height:15px"><div class="ic wh"><svg width="15" height="15"><path d="M5 1.9 L11.1 7.4 L5 12.9 Z" fill="#000"/></svg></div></div>
<div class="t" style="left:1321.4px;top:765.32px;font-size:13.5px;color:#fff;letter-spacing:-0.6px;">Play</div>
<div class="t" style="left:1609.4px;top:765.32px;font-size:13.5px;color:#fff;letter-spacing:0.17px;">Ctrl+Shift+S</div>
<div class="dots" style="left:1893px;top:764px"><i style="left:5px"></i><i style="left:8px"></i><i style="left:11px"></i></div>
<div class="a" style="left:1293px;top:788px;width:15px;height:15px"><div class="ic wh"><svg width="15" height="15"><rect x="3.9" y="1.9" width="2.4" height="11" fill="#000"/><rect x="8" y="1.9" width="3" height="11" fill="#000"/></svg></div></div>
<div class="t" style="left:1321.4px;top:787.32px;font-size:13.5px;color:#fff;letter-spacing:-0.52px;">Pause</div>
<div class="t" style="left:1609.4px;top:787.32px;font-size:13.5px;color:#fff;letter-spacing:0.3px;">Ctrl+Shift+D</div>
<div class="dots" style="left:1893px;top:786px"><i style="left:5px"></i><i style="left:8px"></i><i style="left:11px"></i></div>
<div class="a" style="left:1293px;top:810px;width:15px;height:15px"><div class="ic wh"><svg width="15" height="15"><path d="M2.2 7.4 L8.1 1.9 L8.1 12.9 Z" fill="#000"/><rect x="9.1" y="1.9" width="2.6" height="11" fill="#000"/></svg></div></div>
<div class="t" style="left:1321.4px;top:809.32px;font-size:13.5px;color:#fff;letter-spacing:-0.07px;">Previous Frame</div>
<div class="t" style="left:1609.4px;top:809.32px;font-size:13.5px;color:#fff;letter-spacing:0.3px;">Ctrl+Shift+X</div>
<div class="dots" style="left:1893px;top:808px"><i style="left:5px"></i><i style="left:8px"></i><i style="left:11px"></i></div>
<div class="a" style="left:1293px;top:832px;width:15px;height:15px"><div class="ic wh"><svg width="15" height="15"><rect x="3" y="2" width="2.8" height="11" fill="#000"/><path d="M6.3 2 L12 7.5 L6.3 13 Z" fill="#000"/></svg></div></div>
<div class="t" style="left:1321.4px;top:831.32px;font-size:13.5px;color:#fff;letter-spacing:0.01px;">Next Frame</div>
<div class="t" style="left:1609.4px;top:831.32px;font-size:13.5px;color:#fff;letter-spacing:0.3px;">Ctrl+Shift+C</div>
<div class="dots" style="left:1893px;top:830px"><i style="left:5px"></i><i style="left:8px"></i><i style="left:11px"></i></div>
<div class="a" style="left:1293px;top:854px;width:15px;height:15px"><div class="ic wh"><svg width="15" height="15"><rect x="0.5" y="2.1" width="2.4" height="10.6" fill="#000"/><path d="M2.8 7.4 L8.6 2.1 L8.6 12.7 Z M8.4 7.4 L13.8 2.1 L13.8 12.7 Z" fill="#000"/></svg></div></div>
<div class="t" style="left:1321.4px;top:853.32px;font-size:13.5px;color:#fff;letter-spacing:-0.01px;">Begin of File</div>
<div class="t" style="left:1609.4px;top:853.32px;font-size:13.5px;color:#fff;letter-spacing:0.3px;">Ctrl+Shift+Z</div>
<div class="dots" style="left:1893px;top:852px"><i style="left:5px"></i><i style="left:8px"></i><i style="left:11px"></i></div>
<div class="a" style="left:1293px;top:876px;width:15px;height:15px"><div class="ic wh"><svg width="15" height="15"><rect x="12" y="2.1" width="2.2" height="10.6" fill="#000"/><path d="M0.6 2.1 L6.1 7.4 L0.6 12.7 Z M6 2.1 L12.1 7.4 L6 12.7 Z" fill="#000"/></svg></div></div>
<div class="t" style="left:1321.4px;top:875.32px;font-size:13.5px;color:#fff;letter-spacing:-0.11px;">End of File</div>
<div class="t" style="left:1609.4px;top:875.32px;font-size:13.5px;color:#fff;letter-spacing:0.3px;">Ctrl+Shift+V</div>
<div class="dots" style="left:1893px;top:874px"><i style="left:5px"></i><i style="left:8px"></i><i style="left:11px"></i></div>
<div class="a" style="left:1293px;top:898px;width:15px;height:15px"><div class="ic" style="background:#22ad22"><svg width="15" height="15" fill="none" stroke="#c8f6b8" stroke-width="1.5"><path d="M3.4 2.4 Q0.5 7.4 3.4 12.4"/><path d="M11.6 2.4 Q14.5 7.4 11.6 12.4"/><path d="M5.4 4.3 Q3.3 7.4 5.4 10.5"/><path d="M9.6 4.3 Q11.7 7.4 9.6 10.5"/><path d="M6.1 5.1 L9.1 7.3 L6.1 9.5 Z" fill="#c8f6b8" stroke="none"/></svg></div></div>
<div class="t" style="left:1321.4px;top:897.32px;font-size:13.5px;color:#fff;letter-spacing:0.29px;">Playout</div>
<div class="t" style="left:1609.4px;top:897.32px;font-size:13.5px;color:#fff;letter-spacing:0.3px;">Ctrl+Shift+Q</div>
<div class="dots focus" style="left:1893px;top:896px"><i style="left:5px"></i><i style="left:8px"></i><i style="left:11px"></i></div>
<div class="a" style="left:1293px;top:920px;width:15px;height:15px"><div class="ic" style="background:#a94c80"><svg width="15" height="15" fill="none" stroke="#f6a84a" stroke-width="2"><path d="M2.8 9.2 A4.9 4.9 0 0 1 6 3.1"/><path d="M9 3.1 A4.9 4.9 0 0 1 12.2 9.2"/><path d="M10.9 11.6 A4.9 4.9 0 0 1 4.1 11.6"/></svg></div></div>
<div class="t" style="left:1321.4px;top:919.32px;font-size:13.5px;color:#fff;letter-spacing:0.47px;">Loop On/Off</div>
<div class="t" style="left:1609.4px;top:919.32px;font-size:13.5px;color:#fff;letter-spacing:0.44px;">Ctrl+Shift+W</div>
<div class="dots" style="left:1893px;top:918px"><i style="left:5px"></i><i style="left:8px"></i><i style="left:11px"></i></div>
<div class="a" style="left:1293px;top:942px;width:15px;height:15px"><div class="ic" style="background:#a94c80"><svg width="15" height="15" fill="none" stroke="#f8dcea" stroke-width="1.8"><path d="M4.8 4.5 A4.6 4.6 0 1 0 10.2 4.5"/><path d="M7.5 2 V7.6"/></svg></div></div>
<div class="t" style="left:1321.4px;top:941.32px;font-size:13.5px;color:#fff;letter-spacing:0.39px;">Unload</div>
<div class="t" style="left:1609.4px;top:941.32px;font-size:13.5px;color:#fff;letter-spacing:0.3px;">Ctrl+Shift+E</div>
<div class="dots" style="left:1893px;top:940px"><i style="left:5px"></i><i style="left:8px"></i><i style="left:11px"></i></div>
<div class="a" style="left:1293px;top:964px;width:15px;height:15px"><div class="ic" style="background:#a94c80"><svg width="15" height="15" fill="none" stroke="#f8dcea" stroke-width="1.8"><path d="M3.6 10.2 A4.8 4.8 0 1 1 6.2 12.4"/><path d="M1.8 9 L6.8 9.4 L3.4 13.6 Z" fill="#f8dcea" stroke="none"/></svg></div></div>
<div class="t" style="left:1321.4px;top:963.32px;font-size:13.5px;color:#fff;letter-spacing:-0.17px;">Reload</div>
<div class="t" style="left:1609.4px;top:963.32px;font-size:13.5px;color:#fff;letter-spacing:0.3px;">Ctrl+Shift+R</div>
<div class="dots" style="left:1893px;top:962px"><i style="left:5px"></i><i style="left:8px"></i><i style="left:11px"></i></div>
<div class="a" style="left:0;top:993px;width:1917px;height:27px;background:linear-gradient(#565656,#444 15%,#3a3a3a 50%,#303030 95%,#1a1a1a 96%)"></div>
<svg class="a" style="left:780px;top:1015px" width="60" height="5"><path d="M5.5 1.5 L55.5 1.5 L52.5 5 L8.5 5 Z" fill="#3a3a3a"/></svg>
</body></html>
